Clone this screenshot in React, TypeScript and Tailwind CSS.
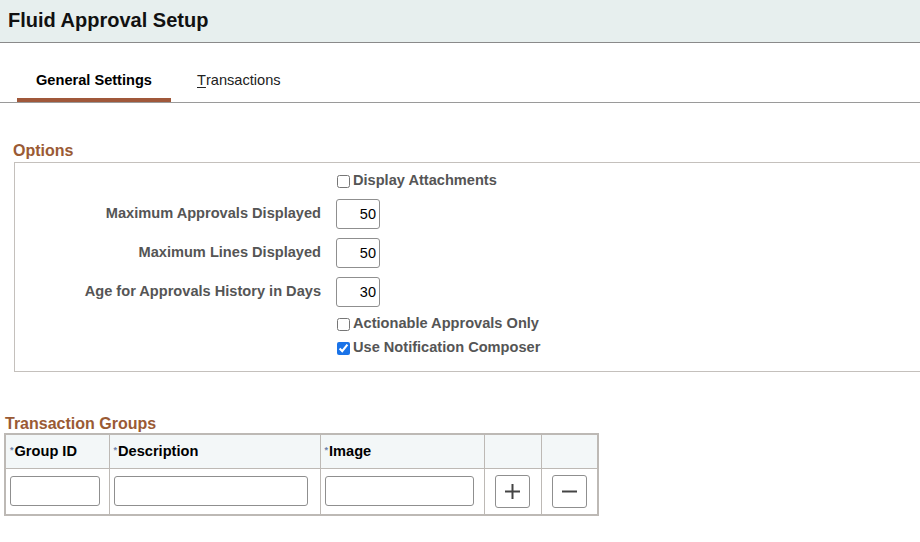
const font = { fontFamily: '"Liberation Sans", Arial, sans-serif' };

function NumField({ label, value }: { label: string; value: string }) {
  return (
    <div className="flex items-center h-[30px]">
      <div className="w-[321px] pr-[15px] text-right text-[14.6px] font-bold text-[#555]">{label}</div>
      <input
        readOnly
        value={value}
        className="w-[44px] h-[30px] border border-[#8f8f8f] rounded-[3px] pl-[4px] pr-[3px] text-right text-[14.5px] text-black outline-none"
      />
    </div>
  );
}

function Check({ label, checked }: { label: string; checked?: boolean }) {
  return (
    <div className="flex items-center h-[16px] pl-[322px]">
      <input
        type="checkbox"
        readOnly
        checked={!!checked}
        className="w-[13px] h-[13px] m-0 mr-[3px] accent-[#1a73e8]"
      />
      <span className="text-[14.6px] font-bold text-[#555]">{label}</span>
    </div>
  );
}

function Req({ text }: { text: string }) {
  return (
    <span className="flex items-center">
      <span className="text-[9px] text-[#6b7fa8] leading-none -mt-[4px] mr-[1px]">*</span>
      <span>{text}</span>
    </span>
  );
}

export default function App() {
  return (
    <div className="w-[920px] h-[542px] bg-white overflow-hidden" style={font}>
      <div className="h-[43px] bg-[#e7efee] border-b border-[#8a8a8a] flex items-center pl-[8px]">
        <h1 className="text-[20px] font-bold text-[#111] -mt-[2px]">Fluid Approval Setup</h1>
      </div>

      <div className="h-[60px] border-b border-[#9a9a9a] flex items-end pl-[17px]">
        <div className="w-[154px] h-[58px] border-b-4 border-[#a0583a] flex items-center justify-center pt-[20px] text-[14.6px] font-bold text-black">
          General Settings
        </div>
        <div className="ml-[26px] h-[58px] flex items-center pt-[16px] text-[14.6px] text-[#222]">
          <span className="underline decoration-1 underline-offset-2">T</span>ransactions
        </div>
      </div>

      <div className="pt-[38px] pl-[13px]">
        <h2 className="text-[16px] font-bold text-[#9a5a34] leading-[20px]">Options</h2>
      </div>
      <div className="ml-[14px] mt-[1px] w-[920px] h-[210px] border border-[#c4c0bc] pt-[10px]">
        <Check label="Display Attachments" />
        <div className="mt-[10px] flex flex-col gap-[9px]">
          <NumField label="Maximum Approvals Displayed" value="50" />
          <NumField label="Maximum Lines Displayed" value="50" />
          <NumField label="Age for Approvals History in Days" value="30" />
        </div>
        <div className="mt-[9px] flex flex-col gap-[8px]">
          <Check label="Actionable Approvals Only" />
          <Check label="Use Notification Composer" checked />
        </div>
      </div>

      <div className="pt-[43px] pl-[5px]">
        <h2 className="text-[16px] font-bold text-[#9a5a34] leading-[18px]">Transaction Groups</h2>
      </div>
      <table className="ml-[4px] w-[595px] border-collapse border-2 border-[#bdb9b5] text-[14.6px] font-bold text-black">
        <thead>
          <tr className="h-[34px] bg-[#f3f7f8]">
            <th className="w-[104px] border border-[#bdb9b5] text-left font-bold pl-[4px] pt-[2px]"><Req text="Group ID" /></th>
            <th className="w-[211px] border border-[#bdb9b5] text-left font-bold pl-[4px] pt-[2px]"><Req text="Description" /></th>
            <th className="w-[164px] border border-[#bdb9b5] text-left font-bold pl-[4px] pt-[2px]"><Req text="Image" /></th>
            <th className="w-[57px] border border-[#bdb9b5]"></th>
            <th className="border border-[#bdb9b5]"></th>
          </tr>
        </thead>
        <tbody>
          <tr className="h-[47px]">
            <td className="border border-[#bdb9b5] pl-[4px]">
              <input readOnly className="block w-[90px] h-[30px] border border-[#8f8f8f] rounded-[3px] outline-none" />
            </td>
            <td className="border border-[#bdb9b5] pl-[4px]">
              <input readOnly className="block w-[194px] h-[30px] border border-[#8f8f8f] rounded-[3px] outline-none" />
            </td>
            <td className="border border-[#bdb9b5] pl-[4px]">
              <input readOnly className="block w-[149px] h-[30px] border border-[#8f8f8f] rounded-[3px] outline-none" />
            </td>
            <td className="border border-[#bdb9b5]">
              <button className="mx-auto flex items-center justify-center w-[35px] h-[33px] border border-[#8f8f8f] rounded-[3px] bg-white">
                <svg width="17" height="17" viewBox="0 0 17 17">
                  <path d="M8.5 1v15M1 8.5h15" stroke="#444" strokeWidth="2" />
                </svg>
              </button>
            </td>
            <td className="border border-[#bdb9b5]">
              <button className="mx-auto flex items-center justify-center w-[35px] h-[33px] border border-[#8f8f8f] rounded-[3px] bg-white">
                <svg width="17" height="17" viewBox="0 0 17 17">
                  <path d="M1 8.5h15" stroke="#444" strokeWidth="2" />
                </svg>
              </button>
            </td>
          </tr>
        </tbody>
      </table>
    </div>
  );
}
